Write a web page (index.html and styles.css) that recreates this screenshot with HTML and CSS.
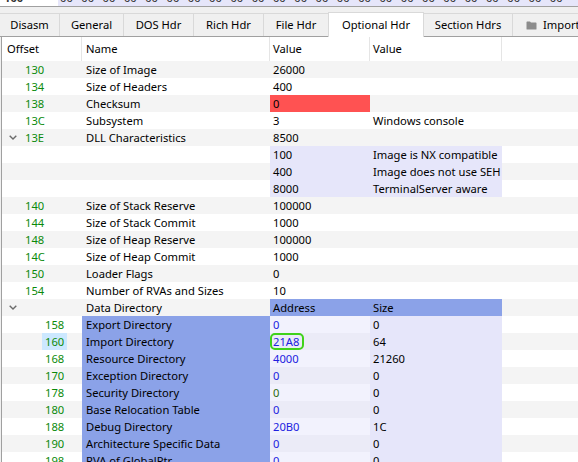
FILE: index.html
```html
<!DOCTYPE html>
<html>
<head>
<meta charset="utf-8">
<link rel="stylesheet" href="styles.css">
</head>
<body>
<div class="hexstrip">
  <div class="hexaddr"><span class="hexline">100</span></div>
  <div class="hexbytes"><span class="hexline"><span class="hb">00</span><span class="hb">00</span><span class="hb">00</span><span class="hb">00</span><span class="hb">00</span><span class="hb">00</span><span class="hb">00</span><span class="hb">00</span><span class="hb">00</span><span class="hb">00</span><span class="hb">00</span><span class="hb">00</span><span class="hb">00</span><span class="hb">00</span><span class="hb">00</span><span class="hb">00</span><span class="hb">00</span><span class="hb">00</span><span class="hb">00</span><span class="hb">00</span><span class="hb">00</span><span class="hb">00</span><span class="hb">00</span><span class="hb">00</span></span></div>
</div>
<div class="tabbar">
  <div class="tab w60">Disasm</div>
  <div class="tab w64">General</div>
  <div class="tab w70">DOS Hdr</div>
  <div class="tab w70">Rich Hdr</div>
  <div class="tab w65">File Hdr</div>
  <div class="tab tab-active w95">Optional Hdr</div>
  <div class="tab w89">Section Hdrs</div>
  <div class="tab tab-last"><svg class="folder" width="11" height="9" viewBox="0 0 11 9"><path d="M0.5 1.2 Q0.5 0.5 1.2 0.5 H4 L5 1.6 H9.8 Q10.5 1.6 10.5 2.3 V8 Q10.5 8.6 9.8 8.6 H1.2 Q0.5 8.6 0.5 8 Z" fill="#8c8c8c"/></svg><span>Imports</span></div>
</div>
<div class="table">
  <div class="row head">
    <div class="c c1 hc">Offset</div>
    <div class="c c2 hc">Name</div>
    <div class="c c3 hc">Value</div>
    <div class="c c4 hc">Value</div>
    <div class="c c5"></div>
  </div>

  <div class="row alt"><div class="c c1"><span class="exp"></span><span class="off">130</span></div><div class="c c2">Size of Image</div><div class="c c3">26000</div><div class="c c4"></div><div class="c c5"></div></div>
  <div class="row"><div class="c c1"><span class="exp"></span><span class="off">134</span></div><div class="c c2">Size of Headers</div><div class="c c3">400</div><div class="c c4"></div><div class="c c5"></div></div>
  <div class="row alt"><div class="c c1"><span class="exp"></span><span class="off">138</span></div><div class="c c2">Checksum</div><div class="c c3 red">0</div><div class="c c4"></div><div class="c c5"></div></div>
  <div class="row"><div class="c c1"><span class="exp"></span><span class="off">13C</span></div><div class="c c2">Subsystem</div><div class="c c3">3</div><div class="c c4">Windows console</div><div class="c c5"></div></div>
  <div class="row alt"><div class="c c1"><span class="exp"><svg class="chev" width="8" height="5" viewBox="0 0 8 5"><path d="M0.7 0.7 L4 4 L7.3 0.7" fill="none" stroke="#6a6a6a" stroke-width="1.4"/></svg></span><span class="off">13E</span></div><div class="c c2">DLL Characteristics</div><div class="c c3">8500</div><div class="c c4"></div><div class="c c5"></div></div>
  <div class="row"><div class="c c1"></div><div class="c c2"></div><div class="c c3 lav">100</div><div class="c c4 lav">Image is NX compatible</div><div class="c c5"></div></div>
  <div class="row alt"><div class="c c1"></div><div class="c c2"></div><div class="c c3 lav">400</div><div class="c c4 lav">Image does not use SEH</div><div class="c c5"></div></div>
  <div class="row"><div class="c c1"></div><div class="c c2"></div><div class="c c3 lav">8000</div><div class="c c4 lav">TerminalServer aware</div><div class="c c5"></div></div>
  <div class="row alt"><div class="c c1"><span class="exp"></span><span class="off">140</span></div><div class="c c2">Size of Stack Reserve</div><div class="c c3">100000</div><div class="c c4"></div><div class="c c5"></div></div>
  <div class="row"><div class="c c1"><span class="exp"></span><span class="off">144</span></div><div class="c c2">Size of Stack Commit</div><div class="c c3">1000</div><div class="c c4"></div><div class="c c5"></div></div>
  <div class="row alt"><div class="c c1"><span class="exp"></span><span class="off">148</span></div><div class="c c2">Size of Heap Reserve</div><div class="c c3">100000</div><div class="c c4"></div><div class="c c5"></div></div>
  <div class="row"><div class="c c1"><span class="exp"></span><span class="off">14C</span></div><div class="c c2">Size of Heap Commit</div><div class="c c3">1000</div><div class="c c4"></div><div class="c c5"></div></div>
  <div class="row alt"><div class="c c1"><span class="exp"></span><span class="off">150</span></div><div class="c c2">Loader Flags</div><div class="c c3">0</div><div class="c c4"></div><div class="c c5"></div></div>
  <div class="row"><div class="c c1"><span class="exp"></span><span class="off">154</span></div><div class="c c2">Number of RVAs and Sizes</div><div class="c c3">10</div><div class="c c4"></div><div class="c c5"></div></div>
  <div class="row alt"><div class="c c1"><span class="exp"><svg class="chev" width="8" height="5" viewBox="0 0 8 5"><path d="M0.7 0.7 L4 4 L7.3 0.7" fill="none" stroke="#6a6a6a" stroke-width="1.4"/></svg></span></div><div class="c c2">Data Directory</div><div class="c c3 blue">Address</div><div class="c c4 blue">Size</div><div class="c c5"></div></div>

  <div class="row dd"><div class="c c1"><span class="off child">158</span></div><div class="c c2 blue">Export Directory</div><div class="c c3 addr">0</div><div class="c c4 lav">0</div><div class="c c5"></div></div>
  <div class="row alt dd"><div class="c c1"><span class="off child sel">160</span></div><div class="c c2 blue">Import Directory</div><div class="c c3 addr"><span class="mark">21A8</span></div><div class="c c4 lav">64</div><div class="c c5"></div></div>
  <div class="row dd"><div class="c c1"><span class="off child">168</span></div><div class="c c2 blue">Resource Directory</div><div class="c c3 addr">4000</div><div class="c c4 lav">21260</div><div class="c c5"></div></div>
  <div class="row alt dd"><div class="c c1"><span class="off child">170</span></div><div class="c c2 blue">Exception Directory</div><div class="c c3 addr">0</div><div class="c c4 lav">0</div><div class="c c5"></div></div>
  <div class="row dd"><div class="c c1"><span class="off child">178</span></div><div class="c c2 blue">Security Directory</div><div class="c c3 addr grn">0</div><div class="c c4 lav">0</div><div class="c c5"></div></div>
  <div class="row alt dd"><div class="c c1"><span class="off child">180</span></div><div class="c c2 blue">Base Relocation Table</div><div class="c c3 addr">0</div><div class="c c4 lav">0</div><div class="c c5"></div></div>
  <div class="row dd"><div class="c c1"><span class="off child">188</span></div><div class="c c2 blue">Debug Directory</div><div class="c c3 addr">20B0</div><div class="c c4 lav">1C</div><div class="c c5"></div></div>
  <div class="row alt dd"><div class="c c1"><span class="off child">190</span></div><div class="c c2 blue">Architecture Specific Data</div><div class="c c3 addr">0</div><div class="c c4 lav">0</div><div class="c c5"></div></div>
  <div class="row dd"><div class="c c1"><span class="off child">198</span></div><div class="c c2 blue">RVA of GlobalPtr</div><div class="c c3 addr">0</div><div class="c c4 lav">0</div><div class="c c5"></div></div>
</div>
</body>
</html>
```

FILE: styles.css
```css
* { box-sizing: border-box; }
html, body { margin: 0; padding: 0; }
body {
  width: 578px;
  height: 462px;
  overflow: hidden;
  background: #f0f0f0;
  font-family: "Noto Sans", "Open Sans", sans-serif;
  font-size: 11.2px;
  color: #000;
}

.hexstrip {
  display: flex;
  height: 7px;
  overflow: hidden;
  border-bottom: 1px solid #a0a0a0;
}
.hexaddr {
  width: 58px;
  background: #ffffff;
  padding-left: 4px;
  font-weight: bold;
  color: #333;
}
.hexbytes {
  flex: 1;
  background: #e6e6fa;
  padding-left: 2px;
  color: #333;
  white-space: nowrap;
}
.hexline {
  display: block;
  line-height: 14px;
  margin-top: -9px;
}
.hb { display: inline-block; width: 21.3px; }

.tabbar {
  display: flex;
  align-items: flex-end;
  height: 30px;
  border-bottom: 1px solid #a0a0a0;
}
.tab {
  height: 23px;
  line-height: 22px;
  text-align: center;
  background: #f0f0f0;
  border-top: 1px solid #d9d9d9;
  border-right: 1px solid #d9d9d9;
  white-space: nowrap;
  overflow: hidden;
  flex-shrink: 0;
}
.w60 { width: 60px; }
.w64 { width: 64px; }
.w70 { width: 70px; }
.w65 { width: 65px; }
.w95 { width: 96px; }
.w89 { width: 89px; }
.tab-active {
  height: 25px;
  margin-bottom: -1px;
  margin-left: -1px;
  background: #ffffff;
  border-left: 1px solid #d9d9d9;
  line-height: 23px;
  position: relative;
}
.tab-last {
  flex: 1;
  text-align: left;
  padding-left: 13px;
  border-right: none;
  display: flex;
  align-items: center;
  gap: 6px;
}
.folder { flex-shrink: 0; }

.table {
  margin-left: 1px;
  border-left: 1px solid #a0a0a0;
  background: #ffffff;
}
.row {
  display: grid;
  grid-template-columns: 80px 188px 100px 132px 1fr;
  height: 17px;
  line-height: 17px;
  white-space: nowrap;
}
.row.alt { background: #f4f4f4; }
.row.head {
  height: 24px;
  line-height: 24px;
  background: #ffffff;
}
.hc { border-right: 1px solid #e5e5e5; }
.c { overflow: hidden; }
.c1 { display: flex; align-items: center; padding-left: 0; }
.head .c1 { padding-left: 5px; }
.c2 { padding-left: 4px; }
.c3 { padding-left: 3px; }
.c4 { padding-left: 3px; }

.exp {
  width: 23px;
  flex-shrink: 0;
  display: flex;
  align-items: center;
  padding-left: 7px;
  height: 17px;
}
.off { color: #0a8a0a; }
.off.child { margin-left: 43px; }
.off.sel {
  background: #cce8ff;
  margin-left: 40px;
  padding: 0 3px;
  line-height: 17px;
}

.red { background: #ff5252; }
.lav { background: #e6e6fa; }
.blue { background: #8ba2e8; }
.addr { color: #2020e0; background: #f2f2fd; }
.row.alt .addr { background: #ebebf7; }
.addr.grn { color: #2a6a10; }

.mark {
  display: inline-block;
  height: 17px;
  line-height: 13px;
  border: 2px solid #3fd21a;
  border-radius: 5px;
  padding: 0 3px 0 1px;
  margin-left: -3px;
}
```
